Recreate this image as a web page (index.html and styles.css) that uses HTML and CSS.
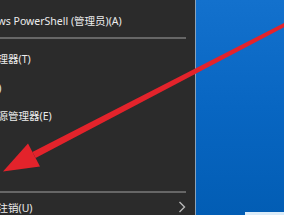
FILE: index.html
```html
<!DOCTYPE html>
<html lang="zh-CN">
<head>
<meta charset="utf-8">
<link rel="stylesheet" href="styles.css">
</head>
<body>
<div class="menu">
  <div class="row first">Windows PowerShell (管理员)(A)</div>
  <div class="sep sep1"></div>
  <div class="row">任务管理器(T)</div>
  <div class="row">设置(N)</div>
  <div class="row">文件资源管理器(E)</div>
  <div class="row">搜索(S)</div>
  <div class="row">运行(R)</div>
  <div class="sep sep2"></div>
  <div class="row sub"><span>关机或注销(U)</span>
    <svg class="chev" width="8" height="12" viewBox="0 0 8 12"><path d="M1.5 1 L6.5 6 L1.5 11" fill="none" stroke="#b8b8b8" stroke-width="1.4"/></svg>
  </div>
</div>
<div class="desktop">
  <div class="win"></div>
</div>
<svg class="arrow" width="284" height="215" viewBox="0 0 284 215">
  <polygon points="285.2,22.3 286.8,25.7 35.6,158.0 32.4,152.0" fill="#e3232b"/>
  <polygon points="28,143.5 40,166.5 3,171.5" fill="#e3232b"/>
</svg>
</body>
</html>
```
FILE: styles.css
```css
html, body {
  margin: 0;
  padding: 0;
}
body {
  width: 284px;
  height: 215px;
  overflow: hidden;
  display: flex;
  position: relative;
  background: #2b2b2b;
  font-family: "Noto Sans", "Noto Sans CJK SC", sans-serif;
}
.menu {
  margin-left: -34px;
  width: 229px;
  flex: none;
  background: #2b2b2b;
  border-right: 1px solid #8da2b6;
  padding-top: 5.75px;
  color: #ececec;
  font-size: 10.5px;
}
.row {
  height: 28.5px;
  display: flex;
  align-items: center;
  white-space: nowrap;
}
.sep {
  height: 2px;
  background: #666;
  margin-right: 9px;
}
.sep1 {
  margin-top: 3px;
  margin-bottom: 5px;
}
.sep2 {
  margin-top: 4px;
  margin-bottom: 0;
}
.sub {
  justify-content: space-between;
  padding-right: 9px;
}
.chev {
  display: block;
}
.desktop {
  flex: 1;
  background: linear-gradient(180deg, #1371cd 0%, #0866c2 50%, #025db4 100%);
  display: flex;
  flex-direction: column;
  justify-content: flex-end;
}
.win {
  height: 3px;
  margin-left: 49px;
  background: #dcecf8;
}
.arrow {
  position: absolute;
  left: 0;
  top: 0;
  pointer-events: none;
}
```
